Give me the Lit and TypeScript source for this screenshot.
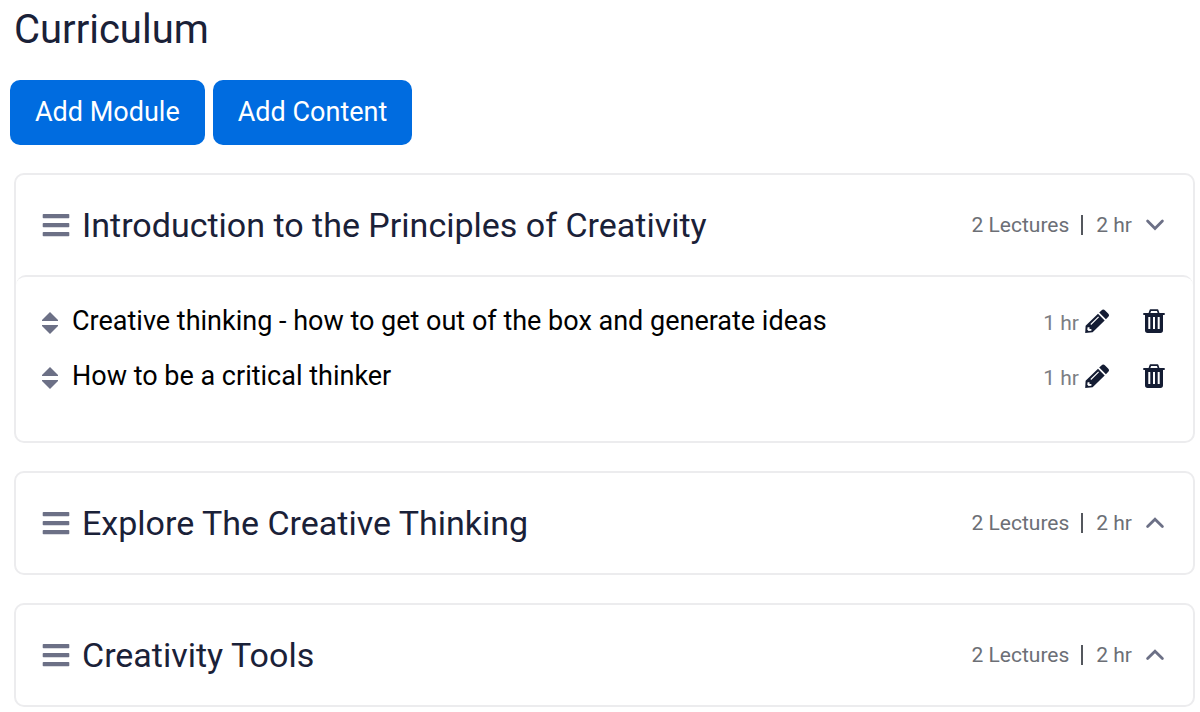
import { LitElement, html, css, svg } from "lit";
import { customElement, property, state } from "lit/decorators.js";

interface Lecture {
  title: string;
  length: string;
}

interface Module {
  title: string;
  lectures: string;
  length: string;
  open: boolean;
  items: Lecture[];
}

const menuIcon = html`<svg class="menu" width="28" height="24" viewBox="0 0 28 24" aria-hidden="true">
  ${[1, 10, 19].map((y) => svg`<rect x="0.7" y=${y} width="26.6" height="4.2" rx="0.8" fill="currentColor"/>`)}
</svg>`;

const sortIcon = html`<svg class="sort" width="16" height="22" viewBox="0 0 16 22" aria-hidden="true">
  <path d="M8 0 L16 8 V9 H0 V8 Z M0 13 H16 V14 L8 22 L0 14 Z" fill="currentColor"/>
</svg>`;

const pencilIcon = html`<svg width="24" height="24" viewBox="0 0 24 24" aria-hidden="true">
  <path fill="currentColor" fill-rule="evenodd"
    d="M16.4 1.4a2.6 2.6 0 0 1 3.7 0l3 3a2.6 2.6 0 0 1 0 3.7l-2.2 2.2-6.7-6.7Z
       M13 4.8l6.7 6.7L7.6 23.2 0.2 24 0.6 16.8Z
       M13.2 7.4 5.4 15.1l0.8 0.8L14 8.2Z
       M2.6 18.2l-0.3 2.5 1.3 1.3 2.8-0.3v-1.7h-1.9v-1.8Z"/>
</svg>`;

const trashIcon = html`<svg width="22" height="24" viewBox="0 0 22 24" aria-hidden="true">
  <path d="M6.3 4.5 7.4 1.2h7.2l1.1 3.3" fill="none" stroke="currentColor" stroke-width="1.7" stroke-linejoin="round"/>
  <path fill="currentColor" fill-rule="evenodd"
    d="M0.3 4.1h21.4v2H20v15.2a2.6 2.6 0 0 1-2.6 2.6H4.6A2.6 2.6 0 0 1 2 21.3V6.1H0.3Z
       M5.3 8.1v12h2V8.1Z M10 8.1v12h2V8.1Z M14.7 8.1v12h2V8.1Z"/>
</svg>`;

@customElement("curriculum-module")
export class CurriculumModule extends LitElement {
  @property({ attribute: false }) module!: Module;

  static styles = css`
    :host {
      display: block;
      border: 2px solid #ececee;
      border-radius: 10px;
      background: #fff;
    }
    .head {
      display: flex;
      align-items: center;
      justify-content: space-between;
      width: 100%;
      height: 100px;
      box-sizing: border-box;
      padding: 0 28px 0 26px;
      border: 0;
      background: none;
      font: inherit;
      color: #1a2138;
      text-align: left;
      cursor: pointer;
    }
    .name {
      display: flex;
      align-items: center;
      gap: 12px;
      font-size: 34px;
      line-height: 40px;
    }
    .menu,
    .sort,
    .chevron {
      flex: none;
      color: #6c7086;
    }
    .meta {
      display: flex;
      align-items: center;
      font-size: 21px;
      line-height: 24px;
      color: #6c6f76;
      white-space: nowrap;
    }
    .bar {
      width: 2px;
      height: 20px;
      margin: 0 13px 0 12px;
      background: #54575d;
    }
    .chevron {
      margin-left: 13px;
    }
    .list {
      margin: 0;
      padding: 17px 28px 38px 26px;
      list-style: none;
      border-top: 2px solid #ececee;
      border-radius: 10px;
    }
    .row {
      display: flex;
      align-items: center;
      height: 54px;
    }
    .row + .row {
      margin-top: 1px;
    }
    .sort {
      margin-right: 14px;
      padding-top: 4px;
    }
    .title {
      flex: 1;
      font-size: 27px;
      line-height: 32px;
      color: #000;
    }
    .time {
      padding-top: 4px;
      margin-right: 6px;
      font-size: 21px;
      line-height: 24px;
      color: #7c7e83;
    }
    .icon {
      display: flex;
      padding: 0;
      border: 0;
      background: none;
      color: #141c33;
      cursor: pointer;
    }
    .icon + .icon {
      margin-left: 34px;
    }
  `;

  private toggle() {
    this.dispatchEvent(new CustomEvent("toggle-module", { bubbles: true, composed: true }));
  }

  render() {
    const m = this.module;
    return html`
      <button class="head" type="button" aria-expanded=${m.open} @click=${this.toggle}>
        <span class="name">${menuIcon}<span>${m.title}</span></span>
        <span class="meta">
          <span>${m.lectures}</span><span class="bar"></span><span>${m.length}</span>
          <svg class="chevron" width="20" height="14" viewBox="0 0 20 14" aria-hidden="true">
            <path d=${m.open ? "M2.6 3 10 10.4 17.4 3" : "M2.6 10.6 10 3.2 17.4 10.6"} fill="none"
              stroke="currentColor" stroke-width="2.8" stroke-linecap="round"/>
          </svg>
        </span>
      </button>
      ${m.open
        ? html`<ul class="list">
            ${m.items.map(
              (item) => html`<li class="row">
                ${sortIcon}
                <span class="title">${item.title}</span>
                <span class="time">${item.length}</span>
                <button class="icon" type="button" aria-label="Edit">${pencilIcon}</button>
                <button class="icon" type="button" aria-label="Delete">${trashIcon}</button>
              </li>`
            )}
          </ul>`
        : null}
    `;
  }
}

@customElement("app-root")
export class AppRoot extends LitElement {
  @state() private modules: Module[] = [
    {
      title: "Introduction to the Principles of Creativity",
      lectures: "2 Lectures",
      length: "2 hr",
      open: true,
      items: [
        { title: "Creative thinking - how to get out of the box and generate ideas", length: "1 hr" },
        { title: "How to be a critical thinker", length: "1 hr" },
      ],
    },
    { title: "Explore The Creative Thinking", lectures: "2 Lectures", length: "2 hr", open: false, items: [] },
    { title: "Creativity Tools", lectures: "2 Lectures", length: "2 hr", open: false, items: [] },
  ];

  static styles = css`
    :host {
      display: block;
      padding: 6px 5px 5px 14px;
      font-family: Roboto, "Liberation Sans", sans-serif;
      background: #fff;
    }
    .heading {
      margin: 0;
      font-size: 40px;
      line-height: 48px;
      font-weight: 400;
      color: #1a2138;
    }
    .actions {
      display: flex;
      gap: 8px;
      margin: 26px 0 28px -4px;
    }
    .add {
      height: 65px;
      padding: 0 25px 2px;
      border: 0;
      border-radius: 10px;
      background: #006ce0;
      color: #fff;
      font: inherit;
      font-size: 27px;
      line-height: 32px;
      cursor: pointer;
    }
    .modules {
      display: grid;
      gap: 28px;
    }
  `;

  private toggle(index: number) {
    this.modules = this.modules.map((m, i) => (i === index ? { ...m, open: !m.open } : m));
  }

  render() {
    return html`
      <h1 class="heading">Curriculum</h1>
      <div class="actions">
        <button class="add" type="button">Add Module</button>
        <button class="add" type="button">Add Content</button>
      </div>
      <div class="modules">
        ${this.modules.map(
          (m, i) => html`<curriculum-module .module=${m} @toggle-module=${() => this.toggle(i)}></curriculum-module>`
        )}
      </div>
    `;
  }
}
